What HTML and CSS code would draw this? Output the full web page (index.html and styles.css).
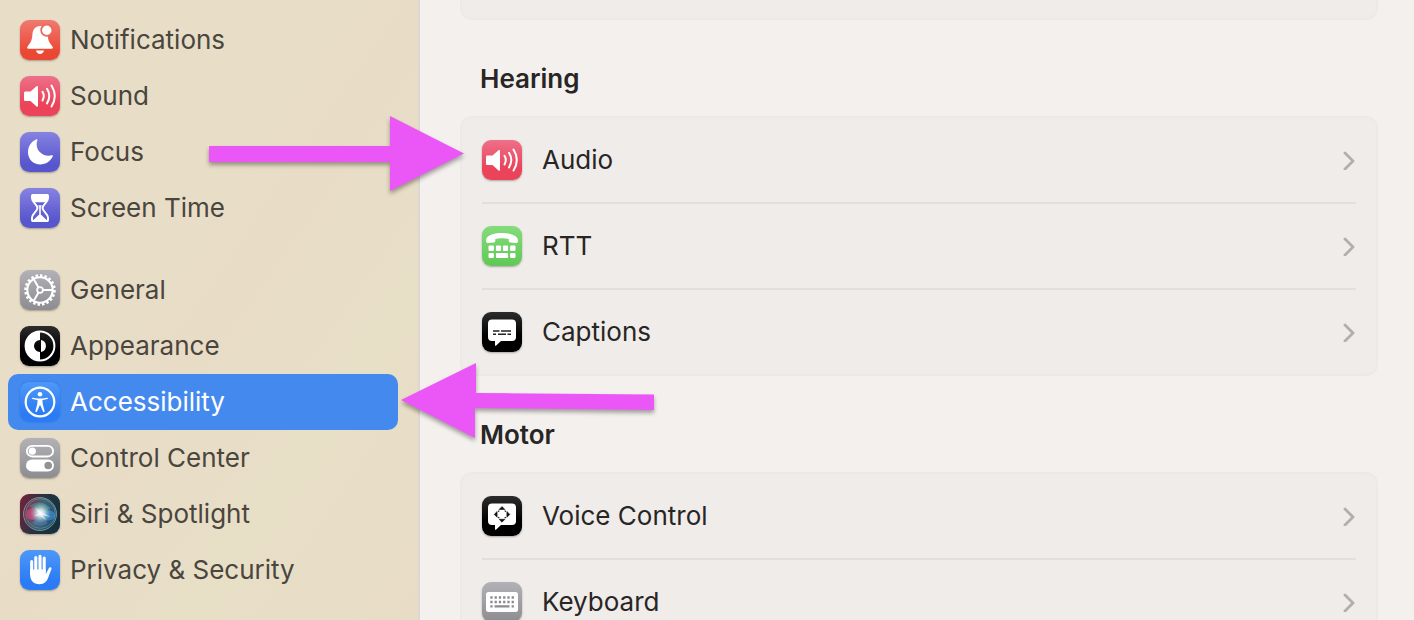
FILE: index.html
```html
<!DOCTYPE html>
<html lang="en">
<head>
    <meta charset="UTF-8">
    <meta name="viewport" content="width=device-width, initial-scale=1">
    <title>Accessibility</title>
    <link rel="stylesheet" href="styles.css">
</head>
<body>
<svg class="defs" aria-hidden="true">
    <symbol id="speaker" viewBox="0 0 40 40">
        <path d="M5.500 15.500h5l6-5.300c.8-.6 1.500-.3 1.500.6v19c0 .8-.7 1.200-1.500.6L10.500 25h-5c-1 0-1.500-.5-1.500-1.500V17c0-1 .5-1.500 1.500-1.500z" fill="#fff"/>
        <path d="M22.500 15.800q2.600 4.300 0 8.600M27 12.800q4.600 7.300 0 14.600M31.500 9.500q6.600 10.500 0 21" fill="none" stroke="#fff" stroke-width="2" stroke-linecap="round"/>
    </symbol>
    <symbol id="bubble" viewBox="0 0 40 40">
        <path d="M10 7.500h20a4 4 0 0 1 4 4V25a4 4 0 0 1-4 4H19l-4.800 4.600c-.7.600-1.200.3-1.200-.5V29h-3a4 4 0 0 1-4-4V11.500a4 4 0 0 1 4-4z" fill="#fff"/>
    </symbol>
    <symbol id="chevron" viewBox="0 0 12 20">
        <path d="M2 3l8 8-8 8" fill="none" stroke="#b1aeac" stroke-width="2.800" stroke-linecap="round" stroke-linejoin="round"/>
    </symbol>
</svg>

<div id="wrapper">
    <nav id="sidebar">
        <ul>
            <li><a href="#">
                <svg class="icon red" viewBox="0 0 40 40">
                    <path d="M20 6c-4.800 0-7.300 3.800-7.600 8.500-.3 5-1.200 7.500-4.500 11.500-1.400 1.800-1 2.700.8 2.700h22.600c1.800 0 2.200-.9.800-2.700-3.300-4-4.200-6.500-4.500-11.500C27.300 9.800 24.800 6 20 6z" fill="#fff"/>
                    <path d="M16 30.600h8c-.5 2.200-2 3.500-4 3.500s-3.500-1.300-4-3.500z" fill="#fff"/>
                    <circle cx="26.800" cy="10.200" r="6.500" fill="#ed6a5b"/>
                    <circle cx="26.800" cy="10.200" r="4.700" fill="#fff"/>
                </svg>
                Notifications</a></li>
            <li><a href="#"><svg class="icon pink"><use href="#speaker"/></svg>Sound</a></li>
            <li><a href="#">
                <svg class="icon indigo" viewBox="0 0 40 40">
                    <path d="M16.500 7.300c.7-.3 1.200.2.900.9-1.300 3.200-1 7.900 1.900 11.200 3.200 3.700 8 5.200 12.500 3.900.9-.2 1.300.3 1 1-2.200 4.900-7 8.200-12.500 8.200C13.300 32.500 8 27.200 8 20.300c0-5.900 3.400-11 8.500-13z" fill="#fff"/>
                </svg>
                Focus</a></li>
            <li><a href="#">
                <svg class="icon indigo" viewBox="0 0 40 40">
                    <path d="M12.700 7h14.600c.5 0 .7.300.7.700v2.500c0 4.200-5.500 6.300-5.500 9.800s5.500 5.600 5.500 9.800v2.500c0 .4-.2.700-.7.700H12.700c-.5 0-.7-.3-.7-.7v-2.500c0-4.200 5.500-6.300 5.500-9.800S12 14.400 12 10.200V7.700c0-.4.200-.7.700-.7z" fill="#6462d2" stroke="#fff" stroke-width="2"/>
                    <path d="M12 7h16v3.200c0 1.500-.6 2.800-1.500 4h-13c-.9-1.200-1.500-2.500-1.500-4z" fill="#fff"/>
                    <path d="M18.200 17.300h3.600l-1 2.200v7L26.600 32H13.400l5.800-5.500v-7z" fill="#fff"/>
                </svg>
                Screen Time</a></li>
        </ul>
        <ul>
            <li><a href="#">
                <svg class="icon gray" viewBox="0 0 40 40" fill="none" stroke="#fff">
                    <circle cx="20" cy="20" r="14.400" stroke-width="2.800" pathLength="40" stroke-dasharray="1.100 0.900"/>
                    <circle cx="20" cy="20" r="12.700" stroke-width="2.100"/>
                    <circle cx="20" cy="20" r="2.900" stroke-width="1.700"/>
                    <path d="M23 20h10M18.500 17.400l-5-8.600M18.500 22.600l-5 8.600" stroke-width="2"/>
                </svg>
                General</a></li>
            <li><a href="#">
                <svg class="icon black" viewBox="0 0 40 40">
                    <circle cx="20" cy="20" r="14.400" fill="none" stroke="#fff" stroke-width="2"/>
                    <path d="M20 5a15 15 0 0 0 0 30v-9a6 6 0 0 1 0-12z" fill="#fff"/>
                    <path d="M21 14.100a6 6 0 0 1 0 11.800z" fill="#fff"/>
                </svg>
                Appearance</a></li>
            <li><a href="#" class="current" aria-current="page">
                <svg class="icon blue" viewBox="0 0 40 40">
                    <circle cx="20" cy="20" r="14.300" fill="none" stroke="#fff" stroke-width="2.200"/>
                    <circle cx="20" cy="12.200" r="2.300" fill="#fff"/>
                    <path d="M12.800 15.700l4.700.8h5l4.700-.8c1-.1 1.200 1.200.2 1.400l-4.500.9c-.5.1-.6.400-.5.900l.5 3.900 1.700 6.300c.3 1.200-1.200 1.600-1.600.5L20.400 23.500h-.8L17 29.600c-.4 1.100-1.900.7-1.600-.5l1.700-6.300.5-3.900c.1-.5 0-.8-.5-.9l-4.500-.9c-1-.2-.8-1.500.2-1.400z" fill="#fff"/>
                </svg>
                Accessibility</a></li>
            <li><a href="#">
                <svg class="icon gray" viewBox="0 0 40 40">
                    <rect x="6.900" y="7.900" width="26.200" height="10.600" rx="5.300" fill="none" stroke="#fff" stroke-width="1.800"/>
                    <circle cx="12.300" cy="13.200" r="3.600" fill="#fff"/>
                    <rect x="6" y="21.500" width="28" height="12" rx="6" fill="#fff"/>
                    <circle cx="28.200" cy="27.500" r="3.800" fill="#929196"/>
                </svg>
                Control Center</a></li>
            <li><a href="#">
                <svg class="icon siri" viewBox="0 0 40 40">
                    <defs>
                        <radialGradient id="glow">
                            <stop offset="0" stop-color="#fff"/>
                            <stop offset="0.350" stop-color="#e4f4f8" stop-opacity="0.800"/>
                            <stop offset="1" stop-color="#7fc9cf" stop-opacity="0"/>
                        </radialGradient>
                        <linearGradient id="orb" x1="0" y1="0.300" x2="1" y2="0.700">
                            <stop offset="0" stop-color="#a02d5c"/>
                            <stop offset="0.500" stop-color="#55829b"/>
                            <stop offset="1" stop-color="#255d97"/>
                        </linearGradient>
                    </defs>
                    <circle cx="20" cy="20" r="16.500" fill="url(#orb)" fill-opacity="0.600" stroke="#7a8b90" stroke-width="1"/>
                    <circle cx="20.500" cy="19.500" r="14.800" fill="none" stroke="#55b59b" stroke-opacity="0.600" stroke-width="0.900"/>
                    <circle cx="12.500" cy="20" r="6" fill="#ef477f" fill-opacity="0.600"/>
                    <ellipse cx="28.500" cy="21.500" rx="7" ry="5" fill="#4195db" fill-opacity="0.600"/>
                    <path d="M9 12Q20 4 31 14L21 20z" fill="#63c9a9" fill-opacity="0.300"/>
                    <path d="M12 29l9-9 7 9q-7 6-16 0z" fill="#7f9cd9" fill-opacity="0.300"/>
                    <circle cx="20.500" cy="19" r="10.500" fill="url(#glow)"/>
                    <path d="M15 13l6.500 5.500L31 23l-9-2 5 6-7-5.500-6 .5 5-2.500z" fill="#fff" fill-opacity="0.600"/>
                </svg>
                Siri &amp; Spotlight</a></li>
            <li><a href="#">
                <svg class="icon blue" viewBox="0 0 40 40">
                    <path d="M11.700 11.500V24M15.800 7.500V22M20 6.300V22M24.200 8V22" stroke="#fff" stroke-width="3.100" stroke-linecap="round"/>
                    <path d="M10.150 19.500h15.600v4.700l3.200-6.200c.7-1.300 3-.8 2.500 1.100l-3.200 8.500c-1.600 4.400-4.300 6.600-8.700 6.600-6.200 0-9.400-3.700-9.400-10z" fill="#fff"/>
                </svg>
                Privacy &amp; Security</a></li>
        </ul>
    </nav>

    <main id="content">
        <div class="card card-end"></div>

        <h2>Hearing</h2>
        <ul class="card">
            <li><button type="button">
                <svg class="icon pink"><use href="#speaker"/></svg>
                <span>Audio</span>
                <svg class="chevron"><use href="#chevron"/></svg>
            </button></li>
            <li><button type="button">
                <svg class="icon green" viewBox="0 0 40 40">
                    <path d="M4 14.500C4 9.500 11 7 20 7s16 2.500 16 7.500c0 1.900-.8 2.700-2.500 2.600l-4.700-.5c-1.500-.1-2.100-.9-2.100-2.200v-1.300c-3.800-1.300-9.600-1.300-13.400 0v1.300c0 1.300-.6 2.100-2.100 2.200l-4.700.5C4.800 17.200 4 16.400 4 14.500z" fill="#fff"/>
                    <g fill="#fff">
                        <rect x="6.500" y="19.500" width="5.400" height="5.400" rx="1"/>
                        <rect x="13.900" y="19.500" width="5.200" height="5.400" rx="1"/>
                        <rect x="20.900" y="19.500" width="5.200" height="5.400" rx="1"/>
                        <rect x="28.100" y="19.500" width="5.400" height="5.400" rx="1"/>
                        <rect x="6.500" y="26.900" width="5.400" height="5.200" rx="1"/>
                        <rect x="13.900" y="26.900" width="12.200" height="5.200" rx="1"/>
                        <rect x="28.100" y="26.900" width="5.400" height="5.200" rx="1"/>
                    </g>
                </svg>
                <span>RTT</span>
                <svg class="chevron"><use href="#chevron"/></svg>
            </button></li>
            <li><button type="button">
                <svg class="icon black" viewBox="0 0 40 40">
                    <use href="#bubble"/>
                    <path d="M11 19h6.500M19 19h10M11 22.200h3M16 22.200h8M25.500 22.200H29" stroke="#222" stroke-width="1.400"/>
                </svg>
                <span>Captions</span>
                <svg class="chevron"><use href="#chevron"/></svg>
            </button></li>
        </ul>

        <h2>Motor</h2>
        <ul class="card">
            <li><button type="button">
                <svg class="icon black" viewBox="0 0 40 40">
                    <use href="#bubble"/>
                    <path d="M20 10.600l2.900 2.900h-5.800zM20 26.200l2.900-2.900h-5.800zM12.200 18.400l2.900-2.900v5.800zM27.800 18.400l-2.900-2.900v5.800z" fill="#111" stroke="#111" stroke-width="0.600" stroke-linejoin="round"/>
                    <path d="M16.200 15.700l1.100-1.100M22.700 14.600l1.100 1.100M23.800 21.100l-1.100 1.100M17.300 22.200l-1.100-1.100" fill="none" stroke="#111" stroke-width="1.200"/>
                </svg>
                <span>Voice Control</span>
                <svg class="chevron"><use href="#chevron"/></svg>
            </button></li>
            <li><button type="button">
                <svg class="icon gray" viewBox="0 0 40 40">
                    <rect x="4" y="10" width="32" height="20" rx="2.500" fill="#fff"/>
                    <path d="M8.300 15.500h23.600M8.300 20h23.600" stroke="#8b8a8e" stroke-width="2.300" stroke-dasharray="2.300 1.960"/>
                    <path d="M8.300 24.300h2.300M12.500 24.300h15M29.600 24.300h2.300" stroke="#8b8a8e" stroke-width="2.300"/>
                </svg>
                <span>Keyboard</span>
                <svg class="chevron"><use href="#chevron"/></svg>
            </button></li>
        </ul>
    </main>

    <!-- pointers over the window -->
    <svg class="arrow arrow-audio" viewBox="0 0 256 76"><path d="M1 30h181V0l74 37.500L182 75V46H1z"/></svg>
    <svg class="arrow arrow-access" viewBox="0 0 254 76"><path d="M0 37L75 0v30l178 1.500V47L74 45v30z"/></svg>
</div>
</body>
</html>
```
FILE: styles.css
```css
*{
    box-sizing: border-box;
}
body{
    margin: 0;
    font-family: Inter, "Liberation Sans", sans-serif;
    font-size: 26px;
    line-height: 32px;
    color: #272625;
    background: #f4f0ed;
}
ul{
    margin: 0;
    padding: 0;
    list-style: none;
}
.defs{
    display: none;
}

#wrapper{
    position: relative;
    display: flex;
    height: 100vh;
    overflow: hidden;
}

/* sidebar */
#sidebar{
    flex: 0 0 420px;
    display: flex;
    flex-direction: column;
    gap: 26px;
    padding: 12px 20px 12px 8px;
    border-right: 2px solid #dcd7d3;
    background: linear-gradient(125deg, #e8dec7 0%, #e8ddc7 40%, #e8dcc7 52%, #e8dfc7 72%, #e8dcc6 100%);
}
#sidebar a{
    display: flex;
    align-items: center;
    gap: 10px;
    height: 56px;
    padding: 0 12px;
    border-radius: 10px;
    color: #4a463e;
    text-decoration: none;
    white-space: nowrap;
}
#sidebar a.current{
    background: #448aee;
    color: #fff;
}

/* icons */
.icon{
    flex: none;
    width: 40px;
    height: 40px;
    border-radius: 9px;
    box-shadow: 0 1px 2px rgba(0, 0, 0, 0.3);
}
.red{
    background: linear-gradient(#f07a70, #eb4735 80%);
}
.pink{
    background: linear-gradient(#ee708a, #eb445a 70%);
}
.indigo{
    background: linear-gradient(#8683e2, #5856cd 80%);
}
.gray{
    background: linear-gradient(#b2b1b6, #8d8c91);
}
.black{
    background: linear-gradient(#2c2c2c, #000 60%);
}
.blue{
    background: linear-gradient(#4d98f8, #2a7bf5 80%);
}
.green{
    background: linear-gradient(#84dc7b, #60c856);
}
.siri{
    background: linear-gradient(110deg, #79203c, #233541 50%, #102f3e);
}
.current .icon{
    box-shadow: 0 0 2px rgba(0, 40, 120, 0.3);
}

/* content */
#content{
    flex: 1;
    min-width: 0;
    padding: 0 36px 0 40px;
}
#content h2{
    margin: 0;
    padding: 43px 20px 21px;
    font-size: 26px;
    font-weight: 600;
    line-height: 32px;
}
.card{
    padding: 0 20px;
    border: 2px solid #edeae6;
    border-radius: 12px;
    background: #f0ece9;
}
.card-end{
    height: 20px;
    border-top: 0;
    border-radius: 0 0 12px 12px;
}
.card li + li{
    border-top: 2px solid #e3dfdc;
}
.card button{
    display: flex;
    align-items: center;
    gap: 20px;
    width: 100%;
    height: 84px;
    padding: 0;
    border: 0;
    background: none;
    font: inherit;
    color: inherit;
    text-align: left;
}
.card button span{
    flex: 1;
}
.chevron{
    width: 12px;
    height: 20px;
    margin-right: 1px;
}

/* arrows */
.arrow{
    position: absolute;
    height: 76px;
    overflow: visible;
    fill: #eb57f7;
    filter: drop-shadow(0 3px 2px rgba(0, 0, 0, 0.35));
    pointer-events: none;
}
.arrow-audio{
    left: 208px;
    top: 116px;
    width: 256px;
}
.arrow-access{
    left: 401px;
    top: 363px;
    width: 254px;
}
```
